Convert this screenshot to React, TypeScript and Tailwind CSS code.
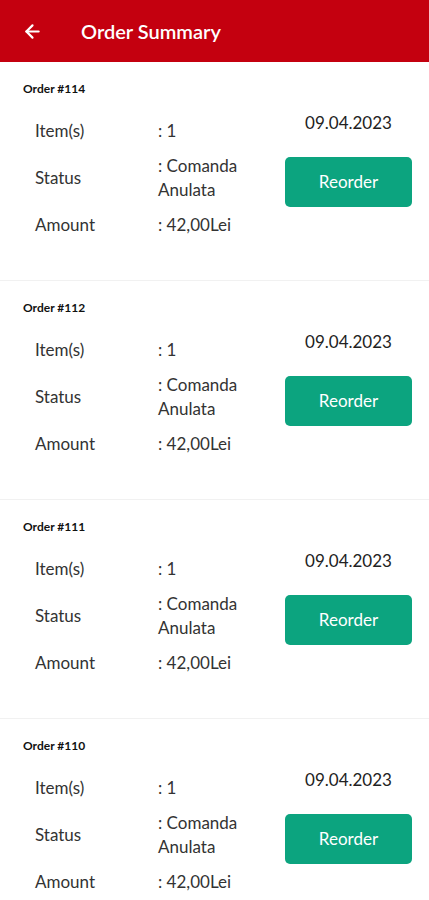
import React from 'react'
import { ArrowLeft } from 'lucide-react'

const orders = [
    { id: 114, items: 1, status: 'Comanda Anulata', amount: '42,00Lei', date: '09.04.2023' },
    { id: 112, items: 1, status: 'Comanda Anulata', amount: '42,00Lei', date: '09.04.2023' },
    { id: 111, items: 1, status: 'Comanda Anulata', amount: '42,00Lei', date: '09.04.2023' },
    { id: 110, items: 1, status: 'Comanda Anulata', amount: '42,00Lei', date: '09.04.2023' },
]

const OrderCard = ({ order }: { order: typeof orders[number] }) => (
    <div className="h-[219px] border-b border-[#f1f1f1] pt-[19px] pl-[23px] pr-[17px]">
        <p className="text-[12px] leading-[16px] font-bold text-[#111]">Order #{order.id}</p>
        <div className="flex mt-[22px]">
            <div className="flex-1 pl-[12px] text-[17px] leading-[24px] text-[#333]">
                <div className="grid grid-cols-[123px_1fr] gap-y-[11px]">
                    <span className="self-center">Item(s)</span>
                    <span>: {order.items}</span>
                    <span className="self-center">Status</span>
                    <span className="flex flex-col">
                        <span>: {order.status.split(' ')[0]}</span>
                        <span>{order.status.split(' ')[1]}</span>
                    </span>
                    <span>Amount</span>
                    <span>: {order.amount}</span>
                </div>
            </div>
            <div className="w-[127px] flex flex-col items-center">
                <span className="text-[17px] leading-[24px] text-[#222] -mt-[8px]">{order.date}</span>
                <button className="mt-[22px] w-[127px] h-[50px] rounded-[5px] bg-[#0ca47f] text-white text-[17px]">Reorder</button>
            </div>
        </div>
    </div>
)

export default function App() {
    return (
        <div className="w-[429px] min-h-[900px] bg-white" style={{ fontFamily: 'Lato, "Open Sans", sans-serif' }}>
            <div className="h-[62px] bg-[#c4000f] flex items-center pl-[22px] text-white">
                <ArrowLeft size={21} strokeWidth={2.5} />
                <span className="ml-[38px] text-[20px] font-semibold">Order Summary</span>
            </div>
            {orders.map((o) => (
                <OrderCard key={o.id} order={o} />
            ))}
        </div>
    )
}
